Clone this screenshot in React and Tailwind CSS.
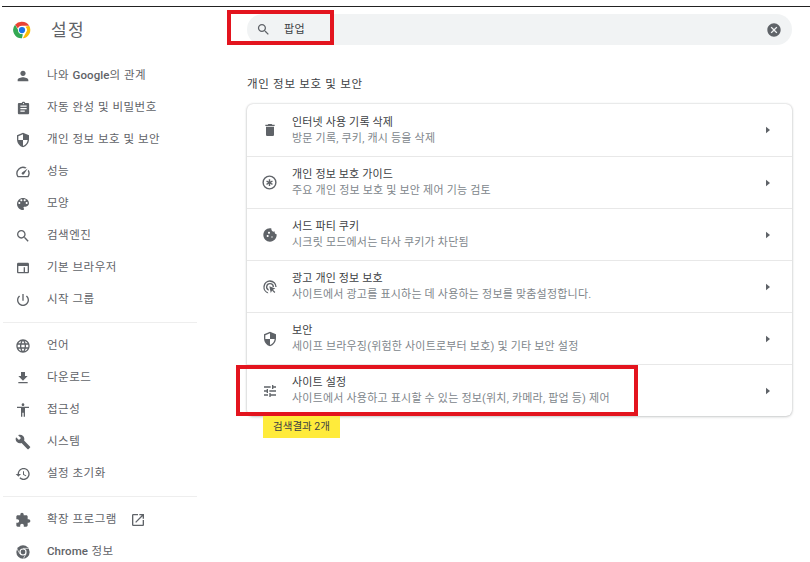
const P = {
  person: "M12 12c2.21 0 4-1.79 4-4s-1.79-4-4-4-4 1.79-4 4 1.79 4 4 4zm0 2c-2.67 0-8 1.34-8 4v2h16v-2c0-2.66-5.33-4-8-4z",
  assignment: "M19 3h-4.18C14.4 1.84 13.3 1 12 1c-1.3 0-2.4.84-2.82 2H5c-1.1 0-2 .9-2 2v14c0 1.1.9 2 2 2h14c1.1 0 2-.9 2-2V5c0-1.1-.9-2-2-2zm-7 0c.55 0 1 .45 1 1s-.45 1-1 1-1-.45-1-1 .45-1 1-1zm2 14H7v-2h7v2zm3-4H7v-2h10v2zm0-4H7V7h10v2z",
  shield: "M12 1L3 5v6c0 5.55 3.84 10.74 9 12 5.16-1.26 9-6.45 9-12V5l-9-4zm0 10.99h7c-.53 4.12-3.28 7.79-7 8.94V12H5V6.3l7-3.11v8.8z",
  speed: "M20.38 8.57l-1.23 1.85a8 8 0 0 1-.22 7.58H5.07A8 8 0 0 1 15.58 6.85l1.85-1.23A10 10 0 0 0 3.35 19a2 2 0 0 0 1.72 1h13.85a2 2 0 0 0 1.74-1 10 10 0 0 0-.27-10.44zm-9.79 6.84a2 2 0 0 0 2.83 0l5.66-8.49-8.49 5.66a2 2 0 0 0 0 2.83z",
  palette: "M12 3c-4.97 0-9 4.03-9 9s4.03 9 9 9c.83 0 1.5-.67 1.5-1.5 0-.39-.15-.74-.39-1.01-.23-.26-.38-.61-.38-.99 0-.83.67-1.5 1.5-1.5H16c2.76 0 5-2.24 5-5 0-4.42-4.03-8-9-8zm-5.5 9c-.83 0-1.5-.67-1.5-1.5S5.67 9 6.5 9 8 9.67 8 10.5 7.33 12 6.5 12zm3-4C8.67 8 8 7.33 8 6.5S8.67 5 9.5 5s1.5.67 1.5 1.5S10.33 8 9.5 8zm5 0c-.83 0-1.5-.67-1.5-1.5S13.67 5 14.5 5s1.5.67 1.5 1.5S15.33 8 14.5 8zm3 4c-.83 0-1.5-.67-1.5-1.5S16.67 9 17.5 9s1.5.67 1.5 1.5-.67 1.5-1.5 1.5z",
  search: "M15.5 14h-.79l-.28-.27C15.41 12.59 16 11.11 16 9.5 16 5.91 13.09 3 9.5 3S3 5.91 3 9.5 5.91 16 9.5 16c1.61 0 3.09-.59 4.23-1.57l.27.28v.79l5 4.99L20.49 19l-4.99-5zm-6 0C7.01 14 5 11.99 5 9.5S7.01 5 9.5 5 14 7.01 14 9.5 11.99 14 9.5 14z",
  browser: "M19 4H5c-1.11 0-2 .9-2 2v12c0 1.1.89 2 2 2h14c1.1 0 2-.9 2-2V6c0-1.1-.89-2-2-2zm0 14h-4v-7h-2v7H5V9h14v9z",
  power: "M13 3h-2v10h2V3zm4.83 2.17l-1.42 1.42C17.99 7.86 19 9.81 19 12c0 3.87-3.13 7-7 7s-7-3.13-7-7c0-2.19 1.01-4.14 2.58-5.42L6.17 5.17C4.23 6.82 3 9.26 3 12c0 4.97 4.03 9 9 9s9-4.03 9-9c0-2.74-1.23-5.18-3.17-6.83z",
  language: "M11.99 2C6.47 2 2 6.48 2 12s4.47 10 9.99 10C17.52 22 22 17.52 22 12S17.52 2 11.99 2zm6.93 6h-2.95c-.32-1.25-.78-2.45-1.38-3.56 1.84.63 3.37 1.91 4.33 3.56zM12 4.04c.83 1.2 1.48 2.53 1.91 3.96h-3.82c.43-1.43 1.08-2.76 1.91-3.96zM4.26 14C4.1 13.36 4 12.69 4 12s.1-1.36.26-2h3.38c-.08.66-.14 1.32-.14 2 0 .68.06 1.34.14 2H4.26zm.82 2h2.95c.32 1.25.78 2.45 1.38 3.56-1.84-.63-3.37-1.9-4.33-3.56zm2.95-8H5.08c.96-1.66 2.49-2.93 4.33-3.56C8.81 5.55 8.35 6.75 8.03 8zM12 19.96c-.83-1.2-1.48-2.53-1.91-3.96h3.82c-.43 1.43-1.08 2.76-1.91 3.96zM14.34 14H9.66c-.09-.66-.16-1.32-.16-2 0-.68.07-1.35.16-2h4.68c.09.65.16 1.32.16 2 0 .68-.07 1.34-.16 2zm.25 5.56c.6-1.11 1.06-2.31 1.38-3.56h2.95c-.96 1.65-2.49 2.93-4.33 3.56zM16.36 14c.08-.66.14-1.32.14-2 0-.68-.06-1.34-.14-2h3.38c.16.64.26 1.31.26 2s-.1 1.36-.26 2h-3.38z",
  download: "M19 9h-4V3H9v6H5l7 7 7-7zM5 18v2h14v-2H5z",
  accessibility: "M12 2c1.1 0 2 .9 2 2s-.9 2-2 2-2-.9-2-2 .9-2 2-2zm9 7h-6v13h-2v-6h-2v6H9V9H3V7h18v2z",
  build: "M22.7 19l-9.1-9.1c.9-2.3.4-5-1.5-6.9-2-2-5-2.4-7.4-1.3L9 6 6 9 1.6 4.7C.4 7.1.9 10.1 2.9 12.1c1.9 1.9 4.6 2.4 6.9 1.5l9.1 9.1c.4.4 1 .4 1.4 0l2.3-2.3c.5-.4.5-1.1.1-1.4z",
  restore: "M13 3c-4.97 0-9 4.03-9 9H1l3.89 3.89.07.14L9 12H6c0-3.87 3.13-7 7-7s7 3.13 7 7-3.13 7-7 7c-1.93 0-3.68-.79-4.94-2.06l-1.42 1.42C8.27 19.99 10.51 21 13 21c4.97 0 9-4.03 9-9s-4.03-9-9-9zm-1 5v5l4.28 2.54.72-1.21-3.5-2.08V8H12z",
  extension: "M20.5 11H19V7c0-1.1-.9-2-2-2h-4V3.5C13 2.12 11.88 1 10.5 1S8 2.12 8 3.5V5H4c-1.1 0-1.99.9-1.99 2v3.8H3.5c1.49 0 2.7 1.21 2.7 2.7s-1.21 2.7-2.7 2.7H2V20c0 1.1.9 2 2 2h3.8v-1.5c0-1.49 1.21-2.7 2.7-2.7 1.49 0 2.7 1.21 2.7 2.7V22H17c1.1 0 2-.9 2-2v-4h1.5c1.38 0 2.5-1.12 2.5-2.5S21.88 11 20.5 11z",
  open: "M19 19H5V5h7V3H5a2 2 0 0 0-2 2v14a2 2 0 0 0 2 2h14c1.1 0 2-.9 2-2v-7h-2v7zM14 3v2h3.59l-9.83 9.83 1.41 1.41L19 6.41V10h2V3h-7z",
  delete: "M6 19c0 1.1.9 2 2 2h8c1.1 0 2-.9 2-2V7H6v12zM19 4h-3.5l-1-1h-5l-1 1H5v2h14V4z",
  tune: "M3 17v2h6v-2H3zM3 5v2h10V5H3zm10 16v-2h8v-2h-8v-2h-2v6h2zM7 9v2H3v2h4v2h2V9H7zm14 4v-2H11v2h10zm-6-4h2V7h4V5h-4V3h-2v6z",
  cancel: "M12 2C6.47 2 2 6.47 2 12s4.47 10 10 10 10-4.47 10-10S17.53 2 12 2zm5 13.59L15.59 17 12 13.41 8.41 17 7 15.59 10.59 12 7 8.41 8.41 7 12 10.59 15.59 7 17 8.41 13.41 12 17 15.59z",
  cookie: "M21.95 10.99c-1.79-.03-3.7-1.95-2.68-4.22-2.97 1-5.78-1.59-5.19-4.56C7.11.74 2 6.41 2 12c0 5.52 4.48 10 10 10 5.89 0 10.54-5.08 9.95-11.01zM8.5 15c-.83 0-1.5-.67-1.5-1.5S7.67 12 8.5 12s1.5.67 1.5 1.5S9.33 15 8.5 15zm2-5C9.67 10 9 9.33 9 8.5S9.67 7 10.5 7s1.5.67 1.5 1.5-.67 1.5-1.5 1.5zm4.5 6c-.55 0-1-.45-1-1s.45-1 1-1 1 .45 1 1-.45 1-1 1z",
  guide: "M12 2a10 10 0 1 0 0 20 10 10 0 0 0 0-20zm0 18a8 8 0 1 1 0-16 8 8 0 0 1 0 16zm1-12.5h-2v3.1L8.3 9l-1 1.7 2.7 1.5-2.7 1.5 1 1.7 2.7-1.6v3.2h2v-3.2l2.7 1.6 1-1.7-2.7-1.5 2.7-1.5-1-1.7-2.7 1.6z",
  ads: "M12 2a10 10 0 0 0-2.6 19.66l-.5-1.95A8 8 0 1 1 20 12h2A10 10 0 0 0 12 2zm0 4a6 6 0 0 0-2 11.66v-2.2A4 4 0 1 1 16 12h2a6 6 0 0 0-6-6zm-1 5 2.2 10 1.9-3.6 3.5 3.6 1.4-1.4-3.6-3.5 3.6-1.9z",
};

function Ico({ d, size = 16, className = "" }) {
  return (
    <svg width={size} height={size} viewBox="0 0 24 24" fill="currentColor" className={className}>
      <path d={d} />
    </svg>
  );
}

function ChromeLogo() {
  return (
    <svg width="20" height="20" viewBox="0 0 48 48">
      <path fill="#ea4335" d="M24 4a20 20 0 0 1 17.32 10H24a10 10 0 0 0-9.5 6.9L7.4 11.3A20 20 0 0 1 24 4z" />
      <path fill="#fbbc05" d="M41.32 14A20 20 0 0 1 26 43.9l8.3-14.9A10 10 0 0 0 32 16z" />
      <path fill="#34a853" d="M24 44A20 20 0 0 1 7.4 11.3l8.7 15A10 10 0 0 0 26 34z" />
      <circle cx="24" cy="24" r="9.5" fill="#fff" />
      <circle cx="24" cy="24" r="7.5" fill="#1a73e8" />
    </svg>
  );
}

function ChromeMono() {
  return (
    <svg width="16" height="16" viewBox="0 0 24 24" fill="none" className="text-[#5f6368]">
      <circle cx="12" cy="12" r="10" fill="currentColor" />
      <circle cx="12" cy="12" r="5.4" fill="#fff" />
      <circle cx="12" cy="12" r="3.6" fill="currentColor" />
      <path d="M12 6.6h8.4M7.3 14.7 3.2 7.6M16.7 14.7 12.5 21.9" stroke="#fff" strokeWidth="1" />
    </svg>
  );
}

function NavItem({ icon, children, extra }) {
  return (
    <div className="flex h-8 items-center">
      <div className="flex w-[47px] shrink-0 justify-center pr-[1px] text-[#5f6368]">{icon}</div>
      <span className="text-[11.5px] tracking-[0.5px] text-[#5f6368]">{children}</span>
      {extra}
    </div>
  );
}

function Row({ icon, title, sub, first }) {
  return (
    <div className={`flex h-[52px] items-center ${first ? "" : "border-t border-[#e8e8e8]"}`}>
      <div className="flex w-[45px] shrink-0 justify-center text-[#5f6368]">{icon}</div>
      <div className="flex min-w-0 flex-1 flex-col pt-[1px] leading-[16px]">
        <span className="text-[11px] tracking-[0.15px] text-[#3c4043]">{title}</span>
        <span className="text-[11px] tracking-[0.2px] text-[#80868b]">{sub}</span>
      </div>
      <svg width="8" height="8" viewBox="0 0 8 8" className="mr-[20px] shrink-0 text-[#5f6368]" fill="currentColor">
        <path d="M2 .8 6 4 2 7.2z" />
      </svg>
    </div>
  );
}

export default function App() {
  const font = { fontFamily: '"Roboto", "Noto Sans CJK KR", sans-serif' };
  return (
    <div className="relative h-[562px] w-[810px] overflow-hidden bg-white" style={font}>
      <div className="ml-[2px] mt-[6px] h-[1px] bg-[#222222]" />
      <div className="flex">
        <aside className="w-[197px] shrink-0">
          <div className="flex h-[45px] items-center pt-[1px]">
            <div className="flex w-[44px] shrink-0 justify-center"><ChromeLogo /></div>
            <span className="ml-[7px] mt-[2px] text-[17px] tracking-[1.3px] text-[#5f6368]">설정</span>
          </div>
          <div className="pt-[8px]">
            <NavItem icon={<Ico d={P.person} />}>나와 <span className="font-medium tracking-[0.1px]">Google</span>의 관계</NavItem>
            <NavItem icon={<Ico d={P.assignment} size={15} />}>자동 완성 및 비밀번호</NavItem>
            <NavItem icon={<Ico d={P.shield} />}>개인 정보 보호 및 보안</NavItem>
            <NavItem icon={<Ico d={P.speed} />}>성능</NavItem>
            <NavItem icon={<Ico d={P.palette} />}>모양</NavItem>
            <NavItem icon={<Ico d={P.search} />}>검색엔진</NavItem>
            <NavItem icon={<Ico d={P.browser} />}>기본 브라우저</NavItem>
            <NavItem icon={<Ico d={P.power} />}>시작 그룹</NavItem>
          </div>
          <div className="mb-[7px] ml-[3px] mt-[6px] border-t border-[#eeeeee]" />
          <NavItem icon={<Ico d={P.language} />}>언어</NavItem>
          <NavItem icon={<Ico d={P.download} />}>다운로드</NavItem>
          <NavItem icon={<Ico d={P.accessibility} />}>접근성</NavItem>
          <NavItem icon={<Ico d={P.build} />}>시스템</NavItem>
          <NavItem icon={<Ico d={P.restore} />}>설정 초기화</NavItem>
          <div className="mb-[7px] ml-[3px] mt-[6px] border-t border-[#eeeeee]" />
          <NavItem
            icon={<Ico d={P.extension} />}
            extra={<Ico d={P.open} size={16} className="ml-[13px] text-[#5f6368]" />}
          >
            확장 프로그램
          </NavItem>
          <NavItem icon={<ChromeMono />}><span className="font-medium tracking-[0.1px]">Chrome</span> 정보</NavItem>
        </aside>
        <main className="ml-[50px] mr-[18px] flex-1">
          <div className="mt-[7px] flex h-[31px] items-center rounded-full bg-[#f1f3f4] pl-[9px] pr-[10px]">
            <Ico d={P.search} size={15} className="text-[#5f6368]" />
            <span className="ml-[13px] flex-1 pt-[1px] text-[11px] tracking-[0.5px] text-[#3c4043]">팝업</span>
            <Ico d={P.cancel} size={16} className="text-[#5f6368]" />
          </div>
          <h2 className="mt-[31px] h-[17px] text-[11.5px] font-normal leading-[17px] tracking-[0.7px] text-[#3c4043]">개인 정보 보호 및 보안</h2>
          <div className="mt-[11px] rounded-[6px] bg-white shadow-[0_0_2px_rgba(60,64,67,0.3),0_1px_3px_rgba(60,64,67,0.2)]">
            <Row first icon={<Ico d={P.delete} />} title="인터넷 사용 기록 삭제" sub="방문 기록, 쿠키, 캐시 등을 삭제" />
            <Row icon={<Ico d={P.guide} size={17} />} title="개인 정보 보호 가이드" sub="주요 개인 정보 보호 및 보안 제어 기능 검토" />
            <Row icon={<Ico d={P.cookie} />} title="서드 파티 쿠키" sub="시크릿 모드에서는 타사 쿠키가 차단됨" />
            <Row icon={<Ico d={P.ads} />} title="광고 개인 정보 보호" sub="사이트에서 광고를 표시하는 데 사용하는 정보를 맞춤설정합니다." />
            <Row icon={<Ico d={P.shield} />} title="보안" sub="세이프 브라우징(위험한 사이트로부터 보호) 및 기타 보안 설정" />
            <Row icon={<Ico d={P.tune} />} title="사이트 설정" sub="사이트에서 사용하고 표시할 수 있는 정보(위치, 카메라, 팝업 등) 제어" />
          </div>
          <div className="ml-[16px] flex h-[22px] w-[77px] items-center justify-center bg-[#ffeb3b] text-[10.5px] text-[#3c4043]">검색결과 2개</div>
        </main>
      </div>
      <div className="pointer-events-none absolute left-[227px] top-[10px] h-[35px] w-[107px] border-[4px] border-[#e3141e]" />
      <div className="pointer-events-none absolute left-[236px] top-[365px] h-[51px] w-[402px] border-[4px] border-[#e3141e]" />
    </div>
  );
}
